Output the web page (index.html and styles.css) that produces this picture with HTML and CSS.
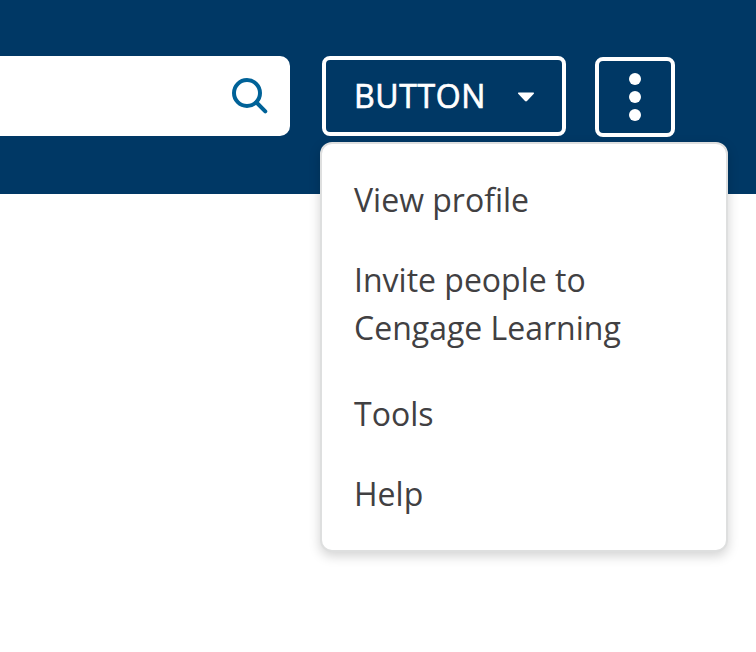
FILE: index.html
```html
<!DOCTYPE html>
<html lang="en">
<head>
<meta charset="utf-8">
<title>Cengage Learning</title>
<link rel="stylesheet" href="styles.css">
</head>
<body>
<header class="bar">
  <div class="search">
    <svg width="40" height="40" viewBox="0 0 40 40" fill="none" stroke="#006298" stroke-width="4" stroke-linecap="round"><circle cx="17" cy="17" r="13"/><path d="M26.5 26.5L35.3 35.3"/></svg>
  </div>
  <div class="dropdown">
    <button class="button"><span class="label">BUTTON</span><svg class="caret" width="18" height="10" viewBox="0 0 18 10"><path d="M1.5 0.5h15q1 .3.3 1.2L10 9q-1 .8-2 0L1.2 1.7q-.7-.9.3-1.2z" fill="#fff"/></svg></button>
    <ul class="menu">
      <li>View profile</li>
      <li class="wide">Invite people to Cengage Learning</li>
      <li>Tools</li>
      <li>Help</li>
    </ul>
  </div>
  <button class="more" aria-label="More"><svg width="12" height="50" viewBox="0 0 12 50" fill="#fff"><circle cx="6" cy="7" r="6"/><circle cx="6" cy="25" r="6"/><circle cx="6" cy="43" r="6"/></svg></button>
</header>
</body>
</html>
```
FILE: styles.css
```css
* { box-sizing: border-box; }
body { margin: 0; min-height: 652px; background: #fff; font-family: "Open Sans", sans-serif; }
.bar { display: flex; align-items: flex-start; height: 194px; padding-top: 56px; background: #003865; }
.search { display: flex; justify-content: flex-end; align-items: center; width: 290px; height: 80px; padding-right: 20px; background: #fff; border-radius: 0 10px 10px 0; }
.dropdown { position: relative; margin-left: 32px; }
.button { display: flex; align-items: center; width: 244px; height: 80px; padding: 0 0 0 28px; border: 4px solid #fff; border-radius: 8px; background: none; color: #fff; font: 400 32px/48px "Open Sans", sans-serif; letter-spacing: .6px; -webkit-text-stroke: .7px #fff; }
.label { width: 131px; }
.caret { margin: 1px 0 0 32px; }
.more { display: flex; align-items: center; justify-content: center; width: 80px; height: 80px; margin: 1px 0 0 29px; padding: 0; border: 4px solid #fff; border-radius: 8px; background: none; }
.menu { position: absolute; top: 86px; left: -2px; width: 408px; height: 410px; margin: 0; padding: 32px; list-style: none; background: #fff; border: 2px solid #dedfdf; border-radius: 12px; box-shadow: 0 4px 12px rgba(0,0,0,.18); color: #414042; font-size: 32px; line-height: 48px; }
.menu li { margin-bottom: 32px; }
.menu .wide { margin-bottom: 38px; }
```
